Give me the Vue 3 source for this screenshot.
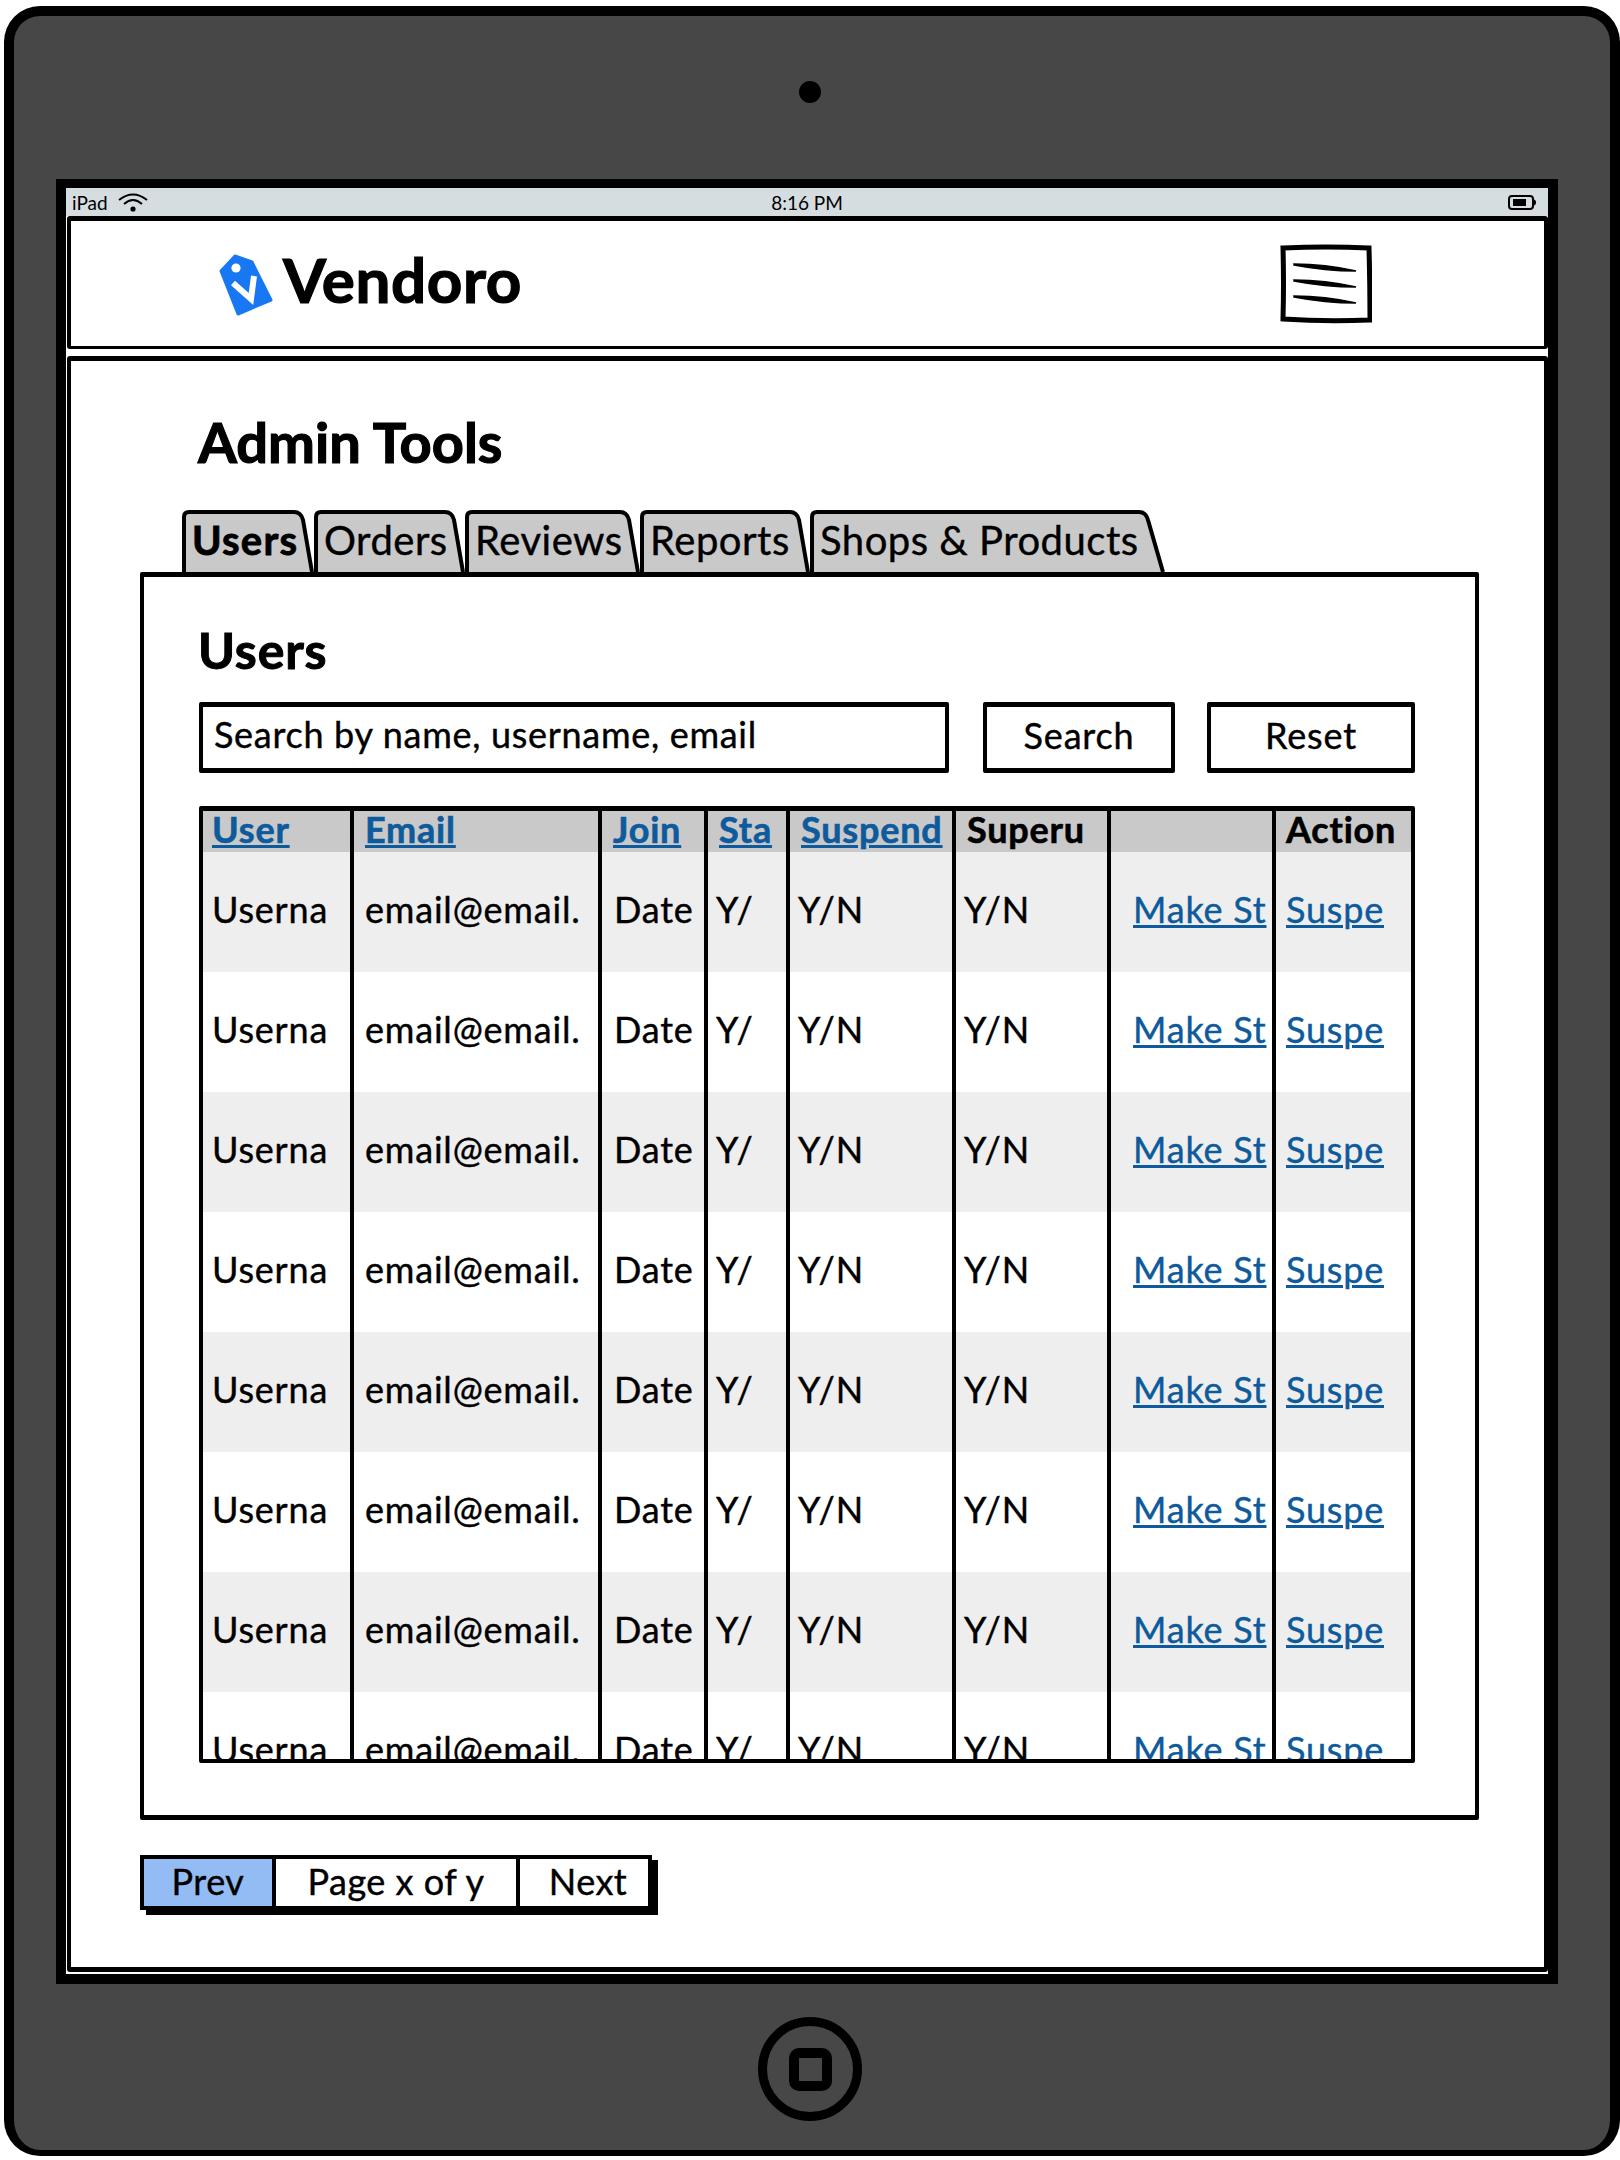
<template>
  <div class="device">
    <div class="camera"></div>
    <div class="screen">
      <div class="status">
        <span class="carrier">iPad</span>
        <svg class="wifi" width="30" height="20" viewBox="0 0 30 20">
          <path d="M1 8 Q15 -3 29 8" fill="none" stroke="#000" stroke-width="2" />
          <path d="M6 12 Q15 4 24 12" fill="none" stroke="#000" stroke-width="2" />
          <circle cx="15" cy="17" r="2.6" fill="#000" />
        </svg>
        <span class="clock">8:16 PM</span>
        <svg class="battery" width="28" height="15" viewBox="0 0 28 15">
          <rect x="1" y="1" width="24" height="13" rx="3" fill="none" stroke="#000" stroke-width="2" />
          <rect x="5" y="4" width="13" height="7" fill="#000" />
          <path d="M26 5 Q28 7.5 26 10" fill="none" stroke="#000" stroke-width="2" />
        </svg>
      </div>

      <header class="topbar">
        <svg class="logo" width="54" height="62" viewBox="0 0 54 62">
          <path d="M16 2 L33 8 L52 46 L19 60 L2 17 Z" fill="#1877f2" stroke="#1877f2" stroke-width="3" stroke-linejoin="round" />
          <circle cx="17" cy="14" r="4.6" fill="#fff" />
          <path d="M14 29 L32 45 L35 22" fill="none" stroke="#fff" stroke-width="6" />
        </svg>
        <span class="brand">Vendoro</span>
        <svg class="menu" width="92" height="80" viewBox="0 0 92 80">
          <path d="M3 4 Q46 2 89 4 Q90 40 90 76 Q46 78 3 75 Q4 40 3 4 Z" fill="#fff" stroke="#000" stroke-width="5" />
          <path d="M14 20 Q45 20 76 27 Q45 27 14 21 Z" stroke="#000" stroke-width="1.5" />
          <path d="M14 36 Q45 36 76 43 Q45 43 14 37 Z" stroke="#000" stroke-width="1.5" />
          <path d="M14 52 Q45 52 76 59 Q45 59 14 53 Z" stroke="#000" stroke-width="1.5" />
        </svg>
      </header>

      <main class="panel">
        <h1 class="title">Admin Tools</h1>

        <div class="tabs">
          <div
            v-for="tab in tabs"
            :key="tab.label"
            class="tab"
            :class="{ active: tab.active }"
            :style="{ width: tab.width + 'px' }"
          >
            <svg class="tab-shape" :width="tab.width" height="62">
              <path :d="tabPath(tab)" fill="#c9c9c9" stroke="#000" stroke-width="4" />
            </svg>
            <span class="tab-label">{{ tab.label }}</span>
          </div>
        </div>

        <section class="card">
          <h2 class="subtitle">Users</h2>

          <div class="search-row">
            <div class="search-input">Search by name, username, email</div>
            <button class="btn btn-search">Search</button>
            <button class="btn btn-reset">Reset</button>
          </div>

          <div class="table-wrap">
            <table class="users">
              <colgroup>
                <col v-for="w in colWidths" :key="w" :style="{ width: w + 'px' }" />
              </colgroup>
              <thead>
                <tr>
                  <th><a>User</a></th>
                  <th><a>Email</a></th>
                  <th><a>Join</a></th>
                  <th><a>Sta</a></th>
                  <th><a>Suspend</a></th>
                  <th>Superu</th>
                  <th></th>
                  <th>Action</th>
                </tr>
              </thead>
              <tbody>
                <tr v-for="n in 8" :key="n">
                  <td>Userna</td>
                  <td>email@email.</td>
                  <td>Date</td>
                  <td>Y/</td>
                  <td>Y/N</td>
                  <td>Y/N</td>
                  <td><a>Make St</a></td>
                  <td><a>Suspe</a></td>
                </tr>
              </tbody>
            </table>
          </div>
        </section>

        <nav class="pager">
          <span class="page-prev">Prev</span>
          <span class="page-info">Page x of y</span>
          <span class="page-next">Next</span>
        </nav>
      </main>
    </div>

    <div class="home">
      <div class="home-square"></div>
    </div>
  </div>
</template>

<script setup>
const tabs = [
  { label: "Users", width: 132, slant: 12, active: true },
  { label: "Orders", width: 151, slant: 12 },
  { label: "Reviews", width: 175, slant: 12 },
  { label: "Reports", width: 170, slant: 12 },
  { label: "Shops & Products", width: 355, slant: 18 },
];

const colWidths = [151, 248, 106, 82, 166, 155, 165, 135];

const tabPath = (tab) => {
  const top = tab.width - tab.slant;
  return `M2 62 V7 Q2 2 7 2 H${top - 8} Q${top - 1} 2 ${top + 1} 10 L${tab.width - 2} 62`;
};
</script>

<style>
html,
body {
  margin: 0;
  background: #fff;
}
</style>

<style scoped>
.device {
  box-sizing: border-box;
  width: 1616px;
  height: 2150px;
  margin: 6px 0 0 4px;
  padding: 0 52px 0 42px;
  background: #474747;
  border: 10px solid #000;
  border-bottom-width: 6px;
  border-radius: 36px;
  display: flex;
  flex-direction: column;
  align-items: center;
  font-family: "Lato", "Liberation Sans", sans-serif;
  color: #000;
  -webkit-text-stroke: 0.4px;
}

.camera {
  flex: none;
  width: 22px;
  height: 22px;
  margin: 65px 0 0 6px;
  border-radius: 50%;
  background: #000;
}

.screen {
  box-sizing: border-box;
  flex: none;
  width: 1502px;
  height: 1805px;
  margin-top: 76px;
  background: #fff;
  border: 10px solid #000;
  border-top-width: 9px;
}

.status {
  height: 28px;
  background: #d6dde0;
  display: flex;
  align-items: center;
  position: relative;
  font-size: 19px;
  padding: 0 12px 0 6px;
  -webkit-text-stroke: 0;
}

.wifi {
  margin-left: 10px;
}

.clock {
  position: absolute;
  left: 0;
  right: 0;
  text-align: center;
}

.battery {
  margin-left: auto;
}

.topbar {
  box-sizing: border-box;
  height: 133px;
  margin-left: 1px;
  border: 4px solid #000;
  border-top-width: 5px;
  border-bottom-width: 3px;
  border-radius: 3px;
  display: flex;
  align-items: center;
  padding-left: 148px;
}

.logo {
  flex: none;
  margin-top: 3px;
}

.brand {
  margin: -10px 0 0 10px;
  font-size: 62px;
  font-weight: 700;
  line-height: 1;
  letter-spacing: 0.6px;
  -webkit-text-stroke: 1.2px;
}

.menu {
  flex: none;
  margin-left: auto;
  margin-right: 172px;
}

.panel {
  box-sizing: border-box;
  height: 1616px;
  margin-top: 7px;
  margin-left: 1px;
  padding: 50px 0 0 69px;
  border: 4px solid #000;
  border-top-width: 5px;
  border-bottom-width: 5px;
  border-radius: 3px;
}

.title {
  margin: 0 0 35px 58px;
  font-size: 56px;
  font-weight: 700;
  line-height: 62px;
  padding-bottom: 2px;
  -webkit-text-stroke: 1.2px;
}

.tabs {
  display: flex;
  height: 62px;
  margin-left: 42px;
}

.tab {
  position: relative;
  flex: none;
  height: 62px;
  font-size: 40px;
  line-height: 60px;
  letter-spacing: 0.5px;
}

.tab.active {
  font-weight: 700;
  letter-spacing: 1.2px;
  -webkit-text-stroke: 0.8px;
}

.tab-shape {
  position: absolute;
  left: 0;
  top: 0;
}

.tab-label {
  position: relative;
  padding-left: 10px;
  white-space: nowrap;
}

.card {
  box-sizing: border-box;
  width: 1339px;
  height: 1248px;
  padding: 45px 0 0 55px;
  border: 4px solid #000;
  border-top-width: 5px;
  border-bottom-width: 5px;
  border-radius: 2px;
  background: #fff;
}

.subtitle {
  margin: 0 0 24px -1px;
  font-size: 50px;
  font-weight: 700;
  line-height: 56px;
  letter-spacing: 0.8px;
  -webkit-text-stroke: 1px;
}

.search-row {
  display: flex;
  height: 71px;
  width: 1216px;
}

.search-input {
  box-sizing: border-box;
  width: 750px;
  padding-left: 11px;
  border: 4px solid #000;
  border-top-width: 5px;
  border-bottom-width: 5px;
  border-radius: 2px;
  font-size: 36px;
  line-height: 54px;
  letter-spacing: 0.7px;
  white-space: nowrap;
}

.btn {
  box-sizing: border-box;
  padding: 0 0 5px;
  background: #fff;
  border: 4px solid #000;
  border-top-width: 5px;
  border-bottom-width: 5px;
  border-radius: 2px;
  font: inherit;
  font-size: 36px;
  letter-spacing: 0.8px;
  color: #000;
  -webkit-text-stroke: 0.4px;
}

.btn-search {
  width: 192px;
  margin-left: 34px;
}

.btn-reset {
  width: 208px;
  margin-left: 32px;
}

.table-wrap {
  box-sizing: border-box;
  width: 1216px;
  height: 957px;
  margin-top: 33px;
  overflow: hidden;
  border: 4px solid #000;
  border-top-width: 5px;
  border-radius: 2px;
}

.users {
  table-layout: fixed;
  width: 1208px;
  border-collapse: separate;
  border-spacing: 0;
  font-size: 36px;
  letter-spacing: 0.8px;
}

.users th,
.users td {
  box-sizing: border-box;
  padding: 0 0 0 11px;
  border-right: 4px solid #000;
  overflow: hidden;
  white-space: nowrap;
  text-align: left;
}

.users th:last-child,
.users td:last-child {
  border-right: 0;
}

.users th {
  height: 41px;
  background: #c9c9c9;
  font-weight: 700;
  line-height: 36px;
  vertical-align: top;
  -webkit-text-stroke: 0.6px;
}

.users td {
  height: 120px;
  padding-bottom: 6px;
}

.users th:nth-child(1),
.users td:nth-child(1) {
  padding-left: 9px;
}

.users td:nth-child(3) {
  padding-left: 12px;
}

.users td:nth-child(4),
.users td:nth-child(5),
.users td:nth-child(6) {
  padding-left: 8px;
}

.users td:nth-child(7) {
  padding-left: 22px;
}

.users td:nth-child(8),
.users th:nth-child(8) {
  padding-left: 10px;
}

.users tbody tr:nth-child(odd) td {
  background: #eeeeee;
}

.users a {
  color: #0d5a9c;
  text-decoration: underline;
  text-decoration-thickness: 3px;
}

.pager {
  box-sizing: border-box;
  display: flex;
  width: 512px;
  height: 55px;
  margin-top: 35px;
  border: 4px solid #000;
  box-shadow: 6px 5px 0 #000;
  font-size: 36px;
  line-height: 44px;
  letter-spacing: 0.5px;
  text-align: center;
}

.page-prev {
  width: 128px;
  background: #93bcf5;
  border-right: 4px solid #000;
}

.page-info {
  width: 240px;
  border-right: 4px solid #000;
}

.page-next {
  flex: 1;
  padding-left: 8px;
}

.home {
  box-sizing: border-box;
  flex: none;
  width: 104px;
  height: 104px;
  margin: 33px 0 0 6px;
  border: 9px solid #000;
  border-radius: 50%;
  display: flex;
  align-items: center;
  justify-content: center;
}

.home-square {
  box-sizing: border-box;
  width: 43px;
  height: 43px;
  border: 10px solid #000;
  border-radius: 10px;
}
</style>
